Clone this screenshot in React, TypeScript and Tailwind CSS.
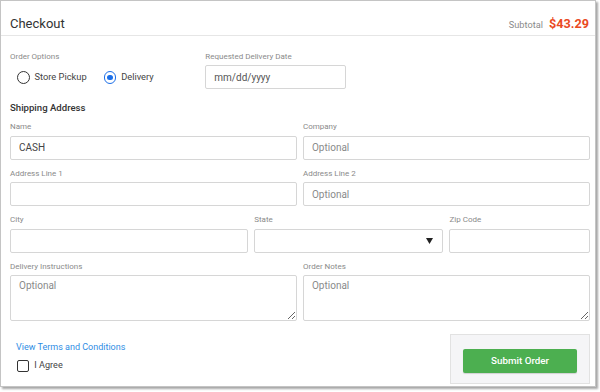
import React from "react";

const labelCls = "block text-[8px] leading-[10px] text-[#8a8a8a] mb-[3.3px] whitespace-nowrap";
const inputCls =
  "block w-full h-[24px] border border-[#d6d6d6] rounded-[2px] px-[8px] text-[10px] text-[#444] placeholder:text-[#8a8a8a] outline-none bg-white";

function Field({ label, placeholder, value, span }: { label: string; placeholder?: string; value?: string; span: string }) {
  return (
    <div className={span}>
      <label className={labelCls}>{label}</label>
      <input className={inputCls} placeholder={placeholder} defaultValue={value} />
    </div>
  );
}

function Area({ label, span }: { label: string; span: string }) {
  return (
    <div className={span}>
      <label className={labelCls}>{label}</label>
      <textarea
        className="block w-full h-[46px] border border-[#d6d6d6] rounded-[2px] px-[8px] pt-[3px] text-[10px] leading-[14px] text-[#444] placeholder:text-[#8a8a8a] outline-none bg-white"
        placeholder="Optional"
      />
    </div>
  );
}

export default function App() {
  return (
    <div className="w-[600px] h-[392px] bg-white font-[Roboto,sans-serif]">
      <div className="w-[596px] h-[387px] border border-[#c4c4c4] shadow-[2px_2px_2px_rgba(0,0,0,0.35)] bg-white box-border">
        {/* Header */}
        <div className="h-[35px] border-b border-[#e6e6e6] pl-[9px] pr-[6px] pt-[13px] flex items-baseline justify-between">
          <span className="text-[13px] leading-[16px] text-[#333]">Checkout</span>
          <span className="flex items-baseline gap-[6px]">
            <span className="text-[9.2px] text-[#8a8a8a]">Subtotal</span>
            <span className="text-[12.7px] font-bold text-[#ea4a1f]">$43.29</span>
          </span>
        </div>

        {/* Body */}
        <div className="pl-[9px] pr-[5px] pt-[16px]">
          <div className="grid grid-cols-12 gap-x-[6px]">
            <div className="col-span-4">
              <label className={labelCls}>Order Options</label>
              <div className="h-[24px] flex items-center pl-[7px] text-[9.3px] text-[#444]">
                <span className="w-[12.5px] h-[12.5px] rounded-full border-[1.6px] border-[#333] box-border" />
                <span className="ml-[5px]">Store Pickup</span>
                <span className="ml-[17px] w-[12.5px] h-[12.5px] rounded-full border-[1.6px] border-[#1c6fe8] box-border flex items-center justify-center">
                  <span className="w-[5.5px] h-[5.5px] rounded-full bg-[#1c6fe8]" />
                </span>
                <span className="ml-[5px]">Delivery</span>
              </div>
            </div>
            <div className="col-span-3">
              <label className={labelCls}>Requested Delivery Date</label>
              <input className={inputCls + " text-[#555]"} readOnly value="mm/dd/yyyy" />
            </div>
          </div>

          <div className="mt-[12px] text-[9.6px] leading-[14px] font-medium text-[#333]">Shipping Address</div>

          <div className="mt-[7px] grid grid-cols-12 gap-x-[6px] gap-y-[9.3px]">
            <Field label="Name" value="CASH" span="col-span-6" />
            <Field label="Company" placeholder="Optional" span="col-span-6" />
            <Field label="Address Line 1" span="col-span-6" />
            <Field label="Address Line 2" placeholder="Optional" span="col-span-6" />
            <Field label="City" span="col-span-5" />
            <div className="col-span-4">
              <label className={labelCls}>State</label>
              <div className="h-[24px] border border-[#d6d6d6] rounded-[2px] bg-white flex items-center justify-end pr-[9px]">
                <svg width="7" height="6" viewBox="0 0 7 6">
                  <path d="M0 0 H7 L3.5 6 Z" fill="#222" />
                </svg>
              </div>
            </div>
            <Field label="Zip Code" span="col-span-3" />
            <Area label="Delivery Instructions" span="col-span-6" />
            <Area label="Order Notes" span="col-span-6" />
          </div>

          <div className="mt-[12.3px] flex items-start justify-between">
            <div className="pl-[6px] pt-[7px]">
              <div className="text-[9px] leading-[12px] text-[#2f8de4]">View Terms and Conditions</div>
              <div className="mt-[6.3px] h-[14px] flex items-center">
                <span className="ml-[1.3px] w-[12px] h-[12px] border-[1.6px] border-[#333] rounded-[2px] box-border" />
                <span className="ml-[5px] text-[9.1px] text-[#444]">I Agree</span>
              </div>
            </div>
            <div className="w-[140px] h-[50px] border border-[#e2e2e2] bg-[#f5f5f7] p-[12px] box-border">
              <button className="w-full h-[24px] bg-[#4caf50] rounded-[2px] text-white text-[9.8px] font-medium shadow-[0_1px_1px_rgba(0,0,0,0.15)]">
                Submit Order
              </button>
            </div>
          </div>
        </div>
      </div>
    </div>
  );
}
